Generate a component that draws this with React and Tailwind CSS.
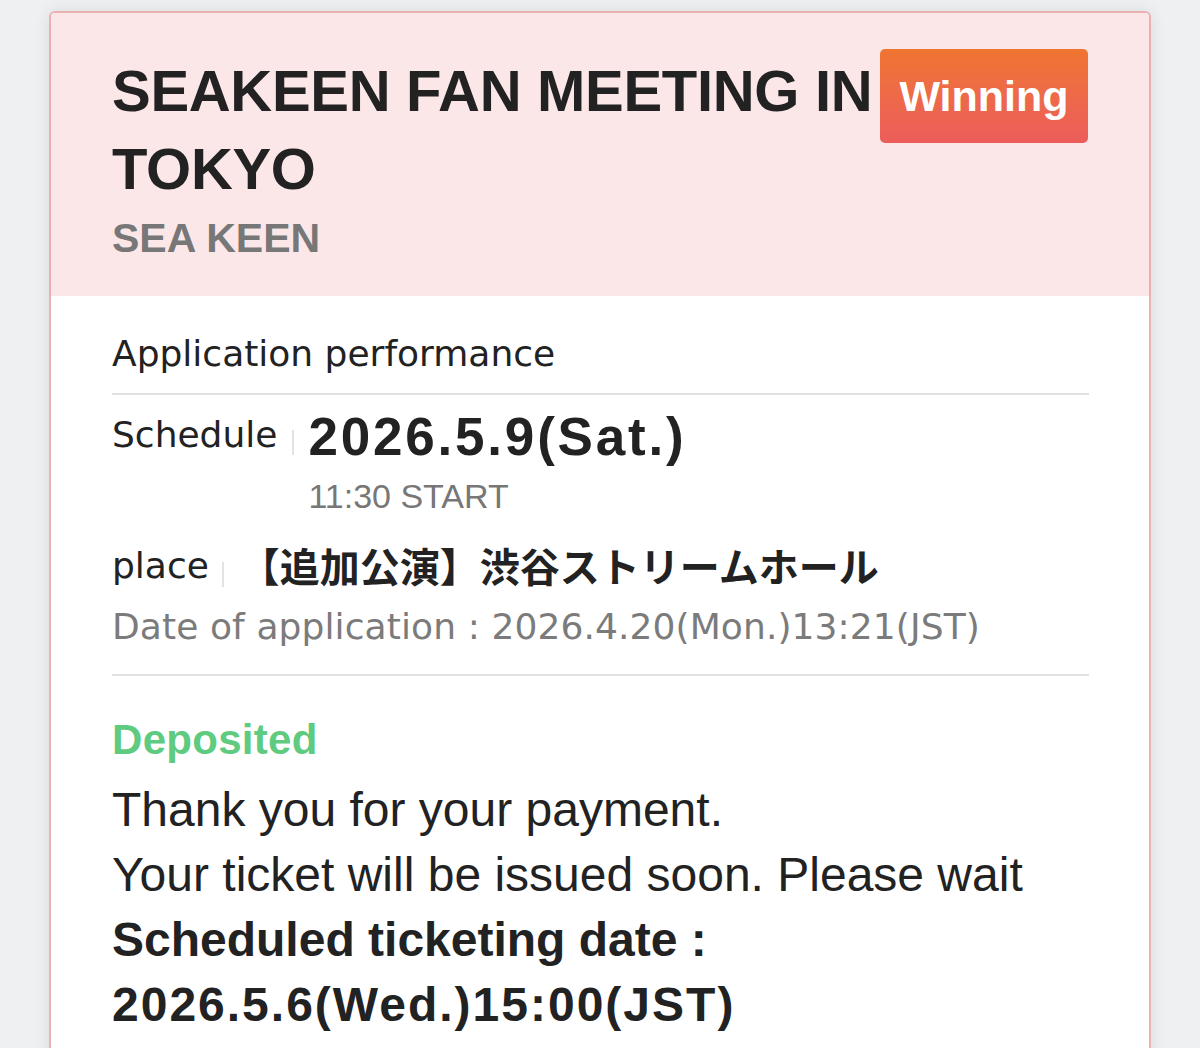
export default function App() {
  const sans = "font-['Liberation_Sans',Arial,sans-serif]";
  const wide = "font-['DejaVu_Sans',sans-serif]";

  return (
    <div className="min-h-screen bg-[#eff0f2] pt-[11px] pb-[40px]">
      <div className="mx-[49px] rounded-[6px] border-2 border-[#ebb0b0] bg-white shadow-[0_0_16px_rgba(0,0,0,0.09)] overflow-hidden">
        {/* Header */}
        <div className={`bg-[#fce7e8] px-[61px] pt-[36px] pb-[34px] ${sans}`}>
          <div className="flex items-start gap-[6px]">
            <h1 className="min-w-0 flex-1 pt-[3px] text-[58px] leading-[78px] font-bold tracking-[-0.3px] text-[#222]">
              SEAKEEN FAN MEETING IN TOKYO
            </h1>
            <span className="flex h-[94px] w-[208px] shrink-0 items-center justify-center rounded-[5px] bg-gradient-to-b from-[#ef7530] to-[#ec5d5a] text-[43px] font-bold text-white">
              Winning
            </span>
          </div>
          <p className="mt-[6px] text-[41px] leading-[48px] font-bold text-[#777]">SEA KEEN</p>
        </div>

        {/* Body */}
        <div className="px-[60px] pl-[61px] pt-[36px] pb-[60px] text-[#222]">
          <div className={`border-b-2 border-[#e1e1e1] pb-[17px] text-[36px] leading-[44px] ${wide}`}>
            Application performance
          </div>

          <div className="mt-[12px] flex items-start">
            <span className={`mt-[6px] text-[36px] leading-[44px] ${wide}`}>Schedule</span>
            <span className="ml-[15px] mr-[14px] mt-[23px] h-[25px] w-[2px] bg-[#e2e2e2]" />
            <div className={sans}>
              <div className="text-[53px] leading-[60px] font-bold tracking-[2.8px]">2026.5.9(Sat.)</div>
              <div className="mt-[9px] text-[34px] leading-[40px] text-[#777]">11:30 START</div>
            </div>
          </div>

          <div className="mt-[25px] flex items-start">
            <span className={`mt-[3px] text-[36px] leading-[44px] ${wide}`}>place</span>
            <span className="ml-[13px] mr-[16px] mt-[21px] h-[25px] w-[2px] bg-[#e2e2e2]" />
            <span className="font-['Noto_Sans_CJK_JP',sans-serif] text-[40px] leading-[48px] font-bold">
              【追加公演】渋谷ストリームホール
            </span>
          </div>

          <div className={`mt-[16px] border-b-2 border-[#e1e1e1] pb-[25px] text-[36px] leading-[44px] tracking-[0.1px] text-[#7b7b7b] ${wide}`}>
            Date of application : 2026.4.20(Mon.)13:21(JST)
          </div>

          <div className={`pt-[39px] ${sans}`}>
            <div className="text-[42px] leading-[50px] font-bold tracking-[0.3px] text-[#5ecb80]">Deposited</div>
            <div className="mt-[12px] text-[48px] leading-[65px]">
              <p>Thank you for your payment.</p>
              <p>Your ticket will be issued soon. Please wait</p>
              <p className="font-bold">Scheduled ticketing date :</p>
              <p className="font-bold tracking-[2px]">2026.5.6(Wed.)15:00(JST)</p>
            </div>
          </div>
        </div>
      </div>
    </div>
  );
}
